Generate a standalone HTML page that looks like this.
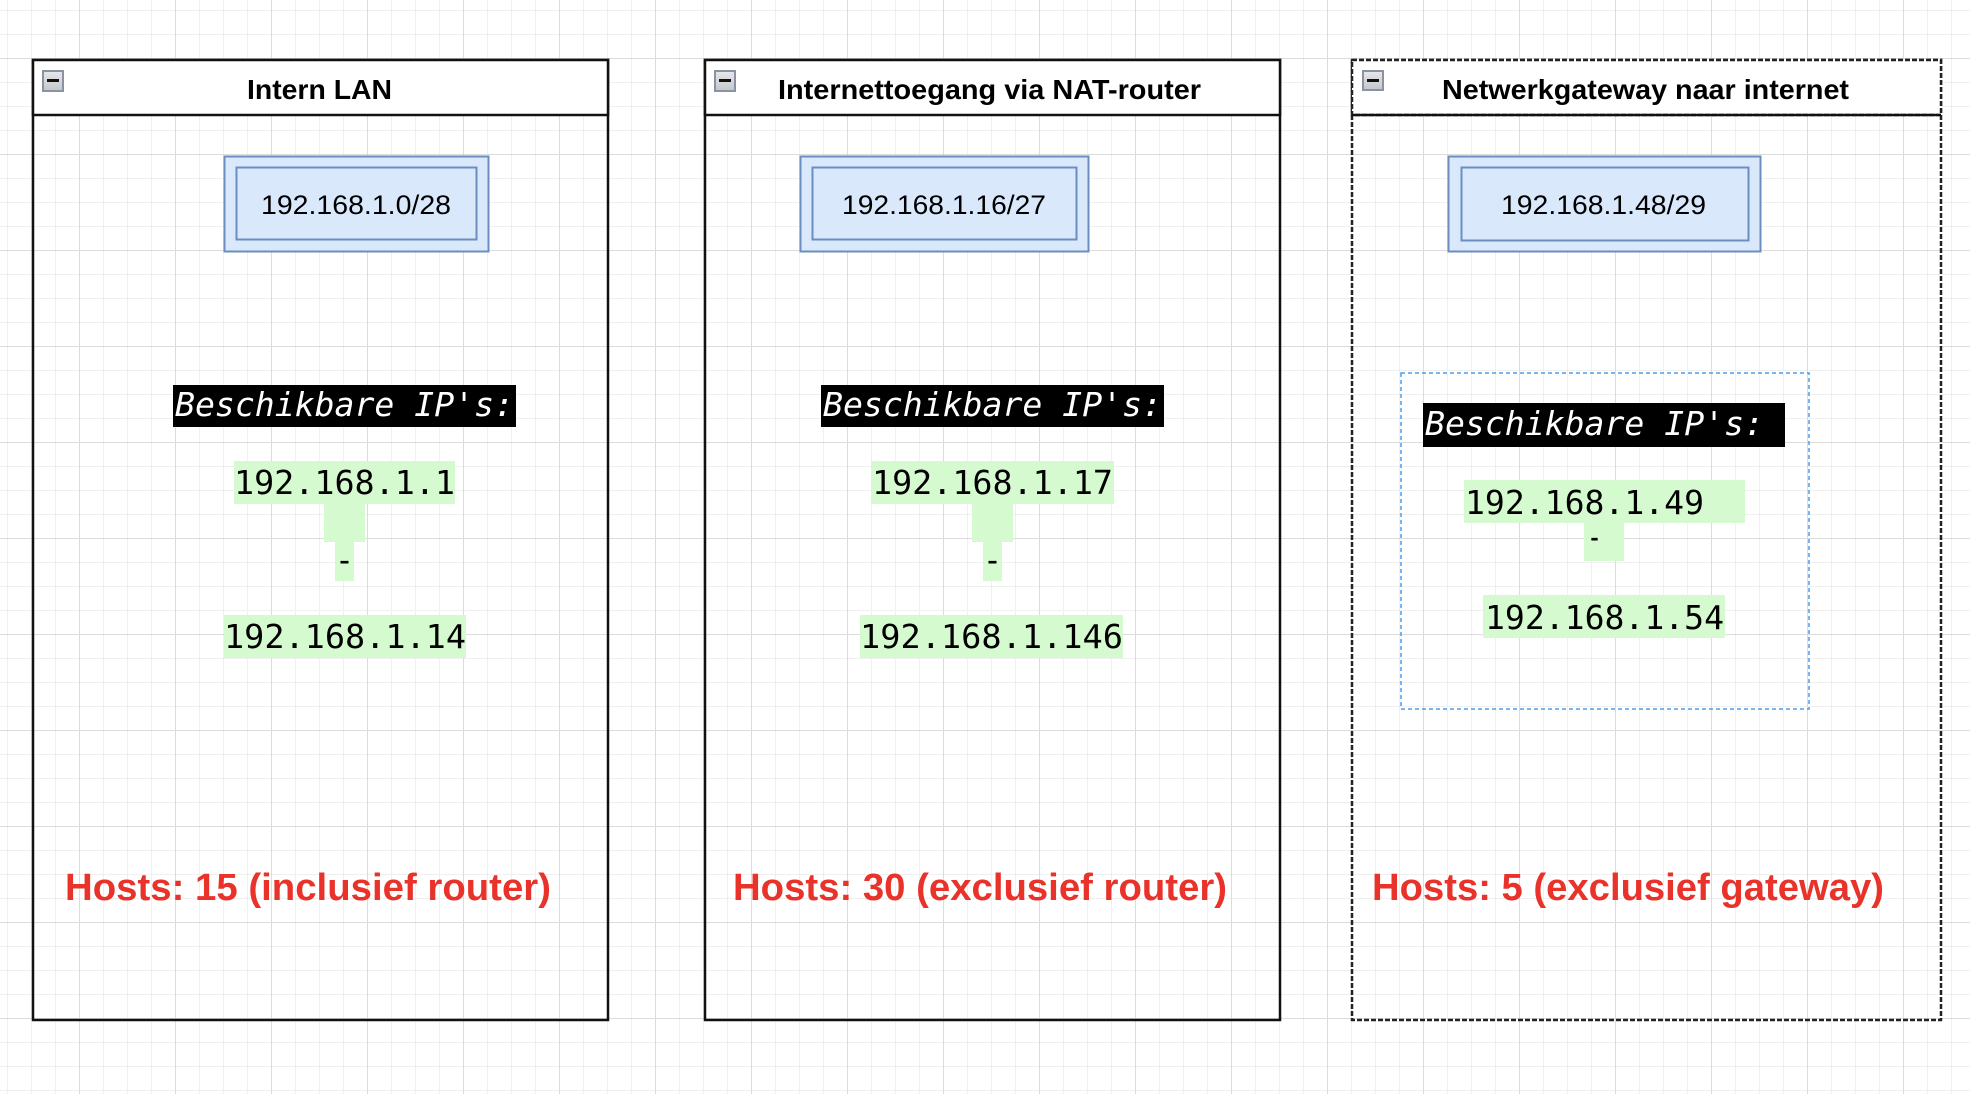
<!DOCTYPE html>
<html><head><meta charset="utf-8"><style>
html,body{margin:0;padding:0;background:#fff;}
svg{display:block;}
.t{font-family:"Liberation Sans",sans-serif;font-weight:bold;}
.n{font-family:"Liberation Sans",sans-serif;}
.m{font-family:"DejaVu Sans Mono","Liberation Mono",monospace;}
</style></head><body>
<svg width="1970" height="1094" viewBox="0 0 1970 1094" xmlns="http://www.w3.org/2000/svg">
<defs>
<pattern id="minor" x="7" y="10" width="24" height="24" patternUnits="userSpaceOnUse">
<path d="M0 0H24M0 0V24" stroke="#ececec" stroke-width="1.5" fill="none"/>
</pattern>
<pattern id="major" x="79" y="58" width="96" height="96" patternUnits="userSpaceOnUse">
<path d="M0 0H96M0 0V96" stroke="#dcdcdc" stroke-width="2" fill="none"/>
</pattern>
<linearGradient id="ic" x1="0" y1="0" x2="0" y2="1"><stop offset="0" stop-color="#e8e8ea"/><stop offset="1" stop-color="#c4c6cc"/></linearGradient>
</defs>
<rect width="1970" height="1094" fill="#fff"/>
<rect width="1970" height="1094" fill="url(#minor)"/>
<rect width="1970" height="1094" fill="url(#major)"/>

<!-- Panel 1 -->
<rect x="33" y="60" width="575" height="960" fill="none" stroke="#111" stroke-width="2.5"/>
<rect x="33" y="60" width="575" height="55" fill="#fff" stroke="#111" stroke-width="2.5"/>
<rect x="43" y="71" width="20" height="20" fill="url(#ic)" stroke="#8a93a3" stroke-width="2"/>
<rect x="47" y="79" width="12" height="3" fill="#111"/>
<text class="t" x="247" y="99" font-size="28" textLength="145" lengthAdjust="spacingAndGlyphs">Intern LAN</text>
<rect x="224.5" y="156.5" width="264" height="95" fill="#dae8fc" stroke="#6c8ebf" stroke-width="2"/>
<rect x="236.5" y="167.5" width="240" height="72" fill="#dae8fc" stroke="#6c8ebf" stroke-width="2"/>
<text class="n" x="261" y="214" font-size="27" textLength="190" lengthAdjust="spacingAndGlyphs">192.168.1.0/28</text>
<rect x="173" y="385" width="343" height="42" fill="#000"/>
<text class="m" x="175" y="416" font-size="33" font-style="italic" fill="#fff" textLength="339" lengthAdjust="spacingAndGlyphs">Beschikbare IP's:</text>
<rect x="234" y="461" width="221" height="43" fill="#d6fad0"/>
<rect x="324" y="504" width="41" height="38" fill="#d6fad0"/>
<rect x="335" y="542" width="19" height="39" fill="#d6fad0"/>
<rect x="224" y="615" width="242" height="43" fill="#d6fad0"/>
<text class="m" x="234" y="494" font-size="33" textLength="221" lengthAdjust="spacingAndGlyphs">192.168.1.1</text>
<text class="m" x="335" y="571" font-size="33" textLength="19" lengthAdjust="spacingAndGlyphs">-</text>
<text class="m" x="224" y="648" font-size="33" textLength="242" lengthAdjust="spacingAndGlyphs">192.168.1.14</text>
<text class="t" x="65" y="900" font-size="38" fill="#e8322a" textLength="486" lengthAdjust="spacingAndGlyphs">Hosts: 15 (inclusief router)</text>

<!-- Panel 2 -->
<rect x="705" y="60" width="575" height="960" fill="none" stroke="#111" stroke-width="2.5"/>
<rect x="705" y="60" width="575" height="55" fill="#fff" stroke="#111" stroke-width="2.5"/>
<rect x="715" y="71" width="20" height="20" fill="url(#ic)" stroke="#8a93a3" stroke-width="2"/>
<rect x="719" y="79" width="12" height="3" fill="#111"/>
<text class="t" x="778" y="99" font-size="28" textLength="423" lengthAdjust="spacingAndGlyphs">Internettoegang via NAT-router</text>
<rect x="800.5" y="156.5" width="288" height="95" fill="#dae8fc" stroke="#6c8ebf" stroke-width="2"/>
<rect x="812.5" y="167.5" width="264" height="72" fill="#dae8fc" stroke="#6c8ebf" stroke-width="2"/>
<text class="n" x="842" y="214" font-size="27" textLength="204" lengthAdjust="spacingAndGlyphs">192.168.1.16/27</text>
<rect x="821" y="385" width="343" height="42" fill="#000"/>
<text class="m" x="823" y="416" font-size="33" font-style="italic" fill="#fff" textLength="339" lengthAdjust="spacingAndGlyphs">Beschikbare IP's:</text>
<rect x="871" y="461" width="243" height="43" fill="#d6fad0"/>
<rect x="972" y="504" width="41" height="38" fill="#d6fad0"/>
<rect x="983" y="542" width="19" height="39" fill="#d6fad0"/>
<rect x="860" y="615" width="263" height="43" fill="#d6fad0"/>
<text class="m" x="872" y="494" font-size="33" textLength="241" lengthAdjust="spacingAndGlyphs">192.168.1.17</text>
<text class="m" x="983" y="571" font-size="33" textLength="19" lengthAdjust="spacingAndGlyphs">-</text>
<text class="m" x="860" y="648" font-size="33" textLength="263" lengthAdjust="spacingAndGlyphs">192.168.1.146</text>
<text class="t" x="733" y="900" font-size="38" fill="#e8322a" textLength="494" lengthAdjust="spacingAndGlyphs">Hosts: 30 (exclusief router)</text>

<!-- Panel 3 -->
<rect x="1352" y="60" width="589" height="960" fill="none" stroke="#222" stroke-width="2.5" stroke-dasharray="5 2"/>
<rect x="1352" y="60" width="589" height="55" fill="#fff" stroke="#222" stroke-width="2.5" stroke-dasharray="5 2"/>
<line x1="1352" y1="115" x2="1941" y2="115" stroke="#111" stroke-width="2.5"/>
<rect x="1363" y="71" width="20" height="19" fill="url(#ic)" stroke="#8a93a3" stroke-width="2"/>
<rect x="1367" y="79" width="12" height="3" fill="#111"/>
<text class="t" x="1442" y="99" font-size="28" textLength="407" lengthAdjust="spacingAndGlyphs">Netwerkgateway naar internet</text>
<rect x="1448.5" y="156.5" width="312" height="95" fill="#dae8fc" stroke="#6c8ebf" stroke-width="2"/>
<rect x="1461.5" y="167.5" width="287" height="73" fill="#dae8fc" stroke="#6c8ebf" stroke-width="2"/>
<text class="n" x="1501" y="214" font-size="27" textLength="205" lengthAdjust="spacingAndGlyphs">192.168.1.48/29</text>
<rect x="1401" y="373" width="408" height="336" fill="none" stroke="#4a9eea" stroke-width="1.5" stroke-dasharray="4 3"/>
<rect x="1423" y="403" width="362" height="44" fill="#000"/>
<text class="m" x="1425" y="435" font-size="33" font-style="italic" fill="#fff" textLength="339" lengthAdjust="spacingAndGlyphs">Beschikbare IP's:</text>
<rect x="1464" y="480" width="281" height="43" fill="#d6fad0"/>
<rect x="1584" y="523" width="40" height="38" fill="#d6fad0"/>
<rect x="1483" y="595" width="242" height="43" fill="#d6fad0"/>
<text class="m" x="1465" y="514" font-size="33" textLength="239" lengthAdjust="spacingAndGlyphs">192.168.1.49</text>
<text class="m" x="1587" y="548" font-size="33" textLength="15" lengthAdjust="spacingAndGlyphs">-</text>
<text class="m" x="1485" y="629" font-size="33" textLength="239" lengthAdjust="spacingAndGlyphs">192.168.1.54</text>
<text class="t" x="1372" y="900" font-size="38" fill="#e8322a" textLength="512" lengthAdjust="spacingAndGlyphs">Hosts: 5 (exclusief gateway)</text>
</svg>
</body></html>
